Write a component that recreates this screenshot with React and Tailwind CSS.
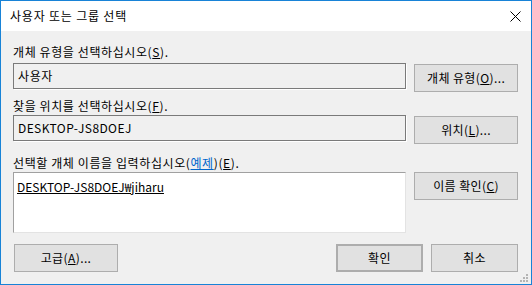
import React from 'react';

const font = { fontFamily: '"Noto Sans CJK KR", "Noto Sans", sans-serif' };

const Button = ({ children, className = '' }) => (
  <button
    className={`h-[28px] bg-[#e1e1e1] border border-[#adadad] text-[12px] leading-none tracking-[0.4px] text-black flex items-center justify-center ${className}`}
  >
    {children}
  </button>
);

const Label = ({ children, className = '' }) => (
  <div className={`h-[16px] text-[12px] leading-[16px] tracking-[0.6px] text-black ${className}`}>{children}</div>
);

const Grip = () => {
  const dots = [
    [6, 0], [3, 3], [6, 3], [0, 6], [3, 6], [6, 6],
  ];
  return (
    <div className="absolute right-[3px] bottom-[2px] w-[8px] h-[8px]">
      {dots.map(([x, y], i) => (
        <span
          key={i}
          className="absolute w-[2px] h-[2px] bg-[#b4b4b4]"
          style={{ left: x, top: y }}
        />
      ))}
    </div>
  );
};

const App = () => {
  return (
    <div
      style={font}
      className="relative w-[532px] h-[285px] border border-[#1883d7] bg-[#f0f0f0] flex flex-col overflow-hidden"
    >
      <div className="h-[30px] bg-white flex items-center justify-between pl-[9px] pr-[10px] shrink-0">
        <span className="text-[12px] text-black leading-none tracking-[0.8px]">사용자 또는 그룹 선택</span>
        <svg width="11" height="11" viewBox="0 0 11 11">
          <path d="M0.5 0.5 L10.5 10.5 M10.5 0.5 L0.5 10.5" stroke="#000" strokeWidth="1" fill="none" />
        </svg>
      </div>

      <div className="flex flex-col pl-[12px] pr-[13px]">
        <Label className="mt-[13px]">
          개체 유형을 선택하십시오(<u>S</u>).
        </Label>
        <div className="flex items-start gap-[8px] mt-[3px]">
          <div className="w-[394px] h-[26px] border border-[#7a7a7a] shadow-[1px_1px_0_#ffffff] bg-[#f0f0f0] flex items-center pl-[4px] text-[12px] tracking-[0.6px] text-black">
            사용자
          </div>
          <Button className="w-[104px] mt-[1px]">
            개체 유형(<u>O</u>)...
          </Button>
        </div>

        <Label className="mt-[6px]">
          찾을 위치를 선택하십시오(<u>F</u>).
        </Label>
        <div className="flex items-start gap-[8px] mt-[1px]">
          <div className="w-[394px] h-[26px] border border-[#7a7a7a] shadow-[1px_1px_0_#ffffff] bg-[#f0f0f0] flex items-center pl-[4px] text-[12px] tracking-[0.4px] text-black">
            DESKTOP-JS8DOEJ
          </div>
          <Button className="w-[104px] mt-[1px]">
            위치(<u>L</u>)...
          </Button>
        </div>

        <Label className="mt-[11px]">
          선택할 개체 이름을 입력하십시오(<span className="text-[#0066cc] underline">예제</span>)(<u>E</u>).
        </Label>
        <div className="flex items-start gap-[8px] mt-[1px]">
          <div className="w-[394px] h-[61px] border border-t-[#a0a0a0] border-l-[#a0a0a0] border-r-[#e3e3e3] border-b-[#e3e3e3] bg-white pl-[3px] pt-[6px] text-[12px] leading-[16px] text-black">
            <span className="underline">DESKTOP-JS8DOEJ₩jiharu</span>
          </div>
          <Button className="w-[104px]">
            이름 확인(<u>C</u>)
          </Button>
        </div>

        <div className="flex items-center mt-[11px]">
          <Button className="w-[104px] ml-[1px]">
            고급(<u>A</u>)...
          </Button>
          <Button className="w-[87px] ml-auto border-2 border-[#0078d7]">확인</Button>
          <Button className="w-[87px] ml-[8px]">취소</Button>
        </div>
      </div>

      <Grip />
    </div>
  );
};

export default App;
